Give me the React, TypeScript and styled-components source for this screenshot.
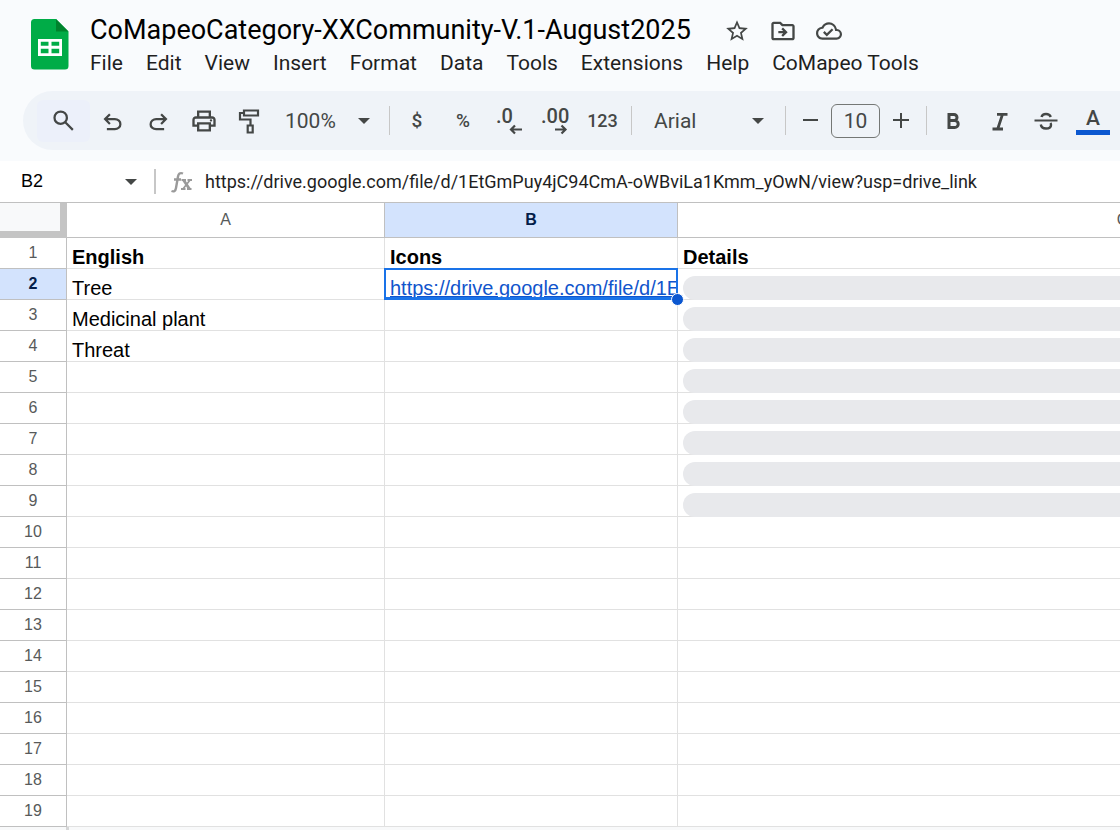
import React from "react";
import styled, { createGlobalStyle } from "styled-components";
import { MdStarBorder, MdOutlineDriveFileMove, MdOutlineCloudDone } from "react-icons/md";

const LINK =
  "https://drive.google.com/file/d/1EtGmPuy4jC94CmA-oWBviLa1Kmm_yOwN/view?usp=drive_link";

const Global = createGlobalStyle`
  * { box-sizing: border-box; }
  body { margin: 0; background: #f9fbfd; overflow: hidden; }
  button, input, select { font: inherit; color: inherit; margin: 0; padding: 0; border: 0; background: none; }
`;

const Page = styled.div`
  display: flex;
  flex-direction: column;
  height: 100vh;
  overflow: hidden;
  font-family: Roboto, "Liberation Sans", sans-serif;
  color: #1f1f1f;
`;

const Header = styled.header`
  display: flex;
  flex: none;
  gap: 21px;
  padding: 13px 0 12px 31px;
`;

const Logo = styled.svg`
  display: block;
  margin-top: 6px;
`;

const HeaderText = styled.div`
  display: flex;
  flex-direction: column;
`;

const TitleRow = styled.div`
  display: flex;
  align-items: center;
  gap: 33px;
  height: 35px;
  white-space: nowrap;
`;

const Title = styled.h1`
  margin: 0;
  padding-bottom: 2px;
  font-size: 27px;
  line-height: 32px;
  font-weight: 400;
  color: #000;
`;

const TitleActions = styled.div`
  display: flex;
  align-items: center;
  gap: 19px;
`;

const PlainButton = styled.button`
  display: flex;
  align-items: center;
  justify-content: center;
  color: #444746;
`;

const MenuBar = styled.nav`
  display: flex;
  gap: 23px;
  height: 31px;
  font-size: 21px;
  line-height: 31px;
  white-space: nowrap;
`;

const Toolbar = styled.div`
  display: flex;
  flex: none;
  align-items: center;
  height: 59px;
  margin-left: 23px;
  padding-left: 14px;
  border-radius: 30px 0 0 30px;
  background: #eff3f8;
  color: #444746;
  overflow: hidden;
  white-space: nowrap;
`;

const ToolButton = styled.button<{ $width?: number; $size?: number }>`
  display: flex;
  flex: none;
  align-items: center;
  justify-content: center;
  width: ${(p) => p.$width ?? 46}px;
  height: 42px;
  font-size: ${(p) => p.$size ?? 19}px;
  font-weight: 500;
`;

const SearchButton = styled(ToolButton)`
  border-radius: 6px;
  background: #ecf0fa;
`;

const Separator = styled.span`
  flex: none;
  width: 1px;
  height: 29px;
  margin: 0 4px;
  background: #c7c7c7;
`;

const SelectBox = styled.label<{ $width: number; $left: number; $right: number }>`
  display: grid;
  flex: none;
  align-items: center;
  width: ${(p) => p.$width}px;
  height: 42px;
  font-size: 21px;

  select,
  svg {
    grid-area: 1 / 1;
  }
  select {
    appearance: none;
    width: 100%;
    height: 42px;
    padding-left: ${(p) => p.$left}px;
  }
  svg {
    justify-self: end;
    margin-right: ${(p) => p.$right}px;
    pointer-events: none;
  }
`;

const SizeInput = styled.input`
  flex: none;
  width: 49px;
  height: 34px;
  border: 1px solid #747775;
  border-radius: 6px;
  font-size: 21px;
  text-align: center;
`;

const ColorLetter = styled.span`
  display: flex;
  flex-direction: column;
  align-items: center;
  width: 34px;
  border-bottom: 5px solid #0b57d0;
  font-size: 21px;
  line-height: 23px;
`;

const FormulaBar = styled.div`
  display: flex;
  flex: none;
  align-items: center;
  height: 42px;
  margin-top: 11px;
  border-bottom: 1px solid #c0c0c0;
  background: #fff;
`;

const NameBox = styled.input`
  width: 107px;
  padding-left: 21px;
  font-family: "Liberation Sans", Arial, sans-serif;
  font-size: 18px;
  color: #000;
`;

const BarDivider = styled.span`
  width: 2px;
  height: 25px;
  margin-right: 15px;
  background: #c7c7c7;
`;

const CaretButton = styled(PlainButton)`
  width: 47px;
  height: 30px;
`;

const FormulaInput = styled.input`
  flex: 1;
  min-width: 0;
  height: 30px;
  margin-left: 12px;
  font-size: 18px;
`;

const Grid = styled.div`
  flex: 1;
  overflow: hidden;
  background: #f8f9fa;
`;

const FreezeHandle = styled.div`
  width: 3px;
  height: 12px;
  margin-left: 66px;
  background: #d5d6d7;
`;

const Sheet = styled.table`
  table-layout: fixed;
  width: 1568px;
  border-spacing: 0;
  background: #fff;
  font-family: "Liberation Sans", Arial, sans-serif;
`;

const Col = styled.col<{ $width: number }>`
  width: ${(p) => p.$width}px;
`;

const Corner = styled.td`
  height: 35px;
  padding: 0;
  border: solid #c4c4c4;
  border-width: 0 7px 7px 0;
  background: #f8f9fa;
`;

const HeadCell = styled.th<{ $active?: boolean }>`
  height: ${(p) => (p.scope === "col" ? 35 : 31)}px;
  padding: 0;
  border: solid #c0c0c0;
  border-width: 0 1px 1px 0;
  background: ${(p) => (p.$active ? "#d3e3fd" : "#fff")};
  color: ${(p) => (p.$active ? "#041e49" : "#575a5a")};
  font-size: 16px;
  line-height: 18px;
  font-weight: ${(p) => (p.$active ? 700 : 400)};
  text-align: center;
`;

const Cell = styled.td<{ $bold?: boolean }>`
  position: relative;
  height: 31px;
  padding: 0 0 0 5px;
  border: solid #e1e1e1;
  border-width: 0 1px 1px 0;
  vertical-align: bottom;
  font-size: 20px;
  line-height: 21px;
  font-weight: ${(p) => (p.$bold ? 700 : 400)};
  color: #000;
  white-space: nowrap;
`;

const CellClip = styled.div`
  overflow: hidden;
  height: 21px;
`;

const CellLink = styled.a`
  color: #1155cc;
  text-decoration: underline;
`;

const Selection = styled.div`
  position: absolute;
  inset: -1px;
  border: 2px solid #1a73e8;
  border-bottom-width: 3px;
`;

const FillHandle = styled.span`
  position: absolute;
  right: -7px;
  bottom: -7px;
  z-index: 1;
  width: 13px;
  height: 13px;
  border: 1px solid #fff;
  border-radius: 50%;
  background: #0b57d0;
`;

const Placeholder = styled.div`
  height: 24px;
  margin: 7px 0 -1px;
  border-radius: 12px;
  background: #e8e9ec;
`;

const Symbol = ({ d, size = 27 }: { d: string; size?: number }) => (
  <svg width={size} height={size} viewBox="0 -960 960 960" fill="currentColor" aria-hidden="true">
    <path d={d} />
  </svg>
);

const Caret = () => (
  <svg width="12" height="6" viewBox="0 0 12 6" fill="#444746" aria-hidden="true">
    <path d="M0 0h12L6 6z" />
  </svg>
);

const SEARCH =
  "M784-120 532-372q-30 24-69 38t-83 14q-109 0-184.500-75.500T120-580q0-109 75.500-184.500T380-840q109 0 184.500 75.500T640-580q0 44-14 83t-38 69l252 252-56 56ZM380-400q75 0 127.500-52.500T560-580q0-75-52.500-127.500T380-760q-75 0-127.500 52.500T200-580q0 75 52.500 127.500T380-400Z";
const UNDO =
  "M280-130v-80h284q63 0 109.500-40T720-350q0-60-46.500-100T564-490H312l104 104-56 56-200-200 200-200 56 56-104 104h252q97 0 169.500 63T800-350q0 94-72.500 157T564-130H280Z";
const REDO =
  "M396-130q-97 0-169.500-63T160-350q0-94 72.500-157T396-570h252L544-674l56-56 200 200-200 200-56-56 104-104H396q-63 0-109.500 40T240-350q0 60 46.500 100T396-210h284v80H396Z";
const PRINT =
  "M640-640v-120H320v120h-80v-200h480v200h-80Zm-480 80h640-640Zm560 100q17 0 28.500-11.500T760-500q0-17-11.500-28.500T720-540q-17 0-28.500 11.500T680-500q0 17 11.500 28.500T720-460Zm-80 260v-160H320v160h320Zm80 80H240v-160H80v-240q0-51 35-85.500t85-34.500h560q51 0 85.500 34.500T880-520v240H720v160Zm80-240v-160q0-17-11.500-28.500T760-560H200q-17 0-28.500 11.500T160-520v160h80v-80h480v80h80Z";

const Roller = () => (
  <svg width="24" height="26" viewBox="0 0 24 26" fill="none" stroke="currentColor" strokeWidth="2.200" aria-hidden="true">
    <path d="M7 2.500h14v5H7zM7 5H3v6.500h10.500V17M10.700 17.500h5v7h-5z" />
  </svg>
);

const DecimalIcon = ({ digits, right }: { digits: string; right?: boolean }) => (
  <svg width="34" height="40" viewBox="0 0 34 40" aria-hidden="true">
    <text x={right ? 3 : 4} y="22" fontSize="20" fontWeight="500" fill="currentColor">
      {digits}
    </text>
    <path
      d={right ? "M17 28.500h10M23.500 24.500l4 4-4 4" : "M19 28.500h11M23 24.500l-4 4 4 4"}
      fill="none"
      stroke="currentColor"
      strokeWidth="2.200"
    />
  </svg>
);

const Strike = () => (
  <svg width="24" height="24" viewBox="0 0 24 24" fill="none" stroke="currentColor" strokeWidth="2.400" aria-hidden="true">
    <path d="M0.500 11.500h23" strokeWidth="2" />
    <path d="M16.800 8c-.8-2-2.600-3-4.800-3-2.400 0-4 1-4.500 3M6.800 15.500c.4 2.700 2.400 4 5.200 4 3 0 5-1.200 5-3.600 0-.8-.2-1.500-.6-2" />
  </svg>
);

const Italic = () => (
  <svg width="16" height="20" viewBox="0 0 16 20" fill="none" stroke="currentColor" strokeWidth="2.800" aria-hidden="true">
    <path d="M5 3.400h10.500M.5 18h10.500M10.500 3.400 5.700 18" />
  </svg>
);

const Bold = () => (
  <svg width="14" height="18" viewBox="0 0 14 18" fill="none" stroke="currentColor" strokeWidth="3" aria-hidden="true">
    <path d="M2 2.500h5a3 3 0 0 1 0 6H2zM2 8.500h5.700a3.500 3.500 0 0 1 0 7H2z" />
  </svg>
);

const Sheets = () => (
  <Logo width="38" height="51" viewBox="0 0 38 51" role="img" aria-label="Sheets">
    <path d="M3.500 0H25l12.500 12.500V47a3.500 3.500 0 0 1-3.500 3.500H3.500A3.500 3.500 0 0 1 0 47V3.500A3.500 3.500 0 0 1 3.500 0z" fill="#00ac47" />
    <path d="M25 0l12.500 12.500H25z" fill="#00832d" />
    <path d="M7 20h24v17H7zM9.800 22.700v4h7.700v-4zm10.700 0v4h7.700v-4zm-10.700 7v4.600h7.700v-4.600zm10.700 0v4.600h7.700v-4.600z" fill="#fff" fillRule="evenodd" />
  </Logo>
);

const MENUS = ["File", "Edit", "View", "Insert", "Format", "Data", "Tools", "Extensions", "Help", "CoMapeo Tools"];
const HEADINGS = ["English", "Icons", "Details"];
const NAMES: Record<number, string> = { 2: "Tree", 3: "Medicinal plant", 4: "Threat" };
const ROWS = Array.from({ length: 18 }, (_, i) => i + 2);

export default function App() {
  return (
    <Page>
      <Global />
      <Header>
        <Sheets />
        <HeaderText>
          <TitleRow>
            <Title>CoMapeoCategory-XXCommunity-V.1-August2025</Title>
            <TitleActions>
              <PlainButton aria-label="Star"><MdStarBorder size={26} /></PlainButton>
              <PlainButton aria-label="Move"><MdOutlineDriveFileMove size={28} /></PlainButton>
              <PlainButton aria-label="Saved to Drive"><MdOutlineCloudDone size={26} /></PlainButton>
            </TitleActions>
          </TitleRow>
          <MenuBar>
            {MENUS.map((m) => (
              <button key={m}>{m}</button>
            ))}
          </MenuBar>
        </HeaderText>
      </Header>

      <Toolbar role="toolbar">
        <SearchButton $width={53} aria-label="Search the menus"><Symbol d={SEARCH} /></SearchButton>
        <ToolButton $width={45} aria-label="Undo"><Symbol d={UNDO} /></ToolButton>
        <ToolButton aria-label="Redo"><Symbol d={REDO} /></ToolButton>
        <ToolButton $width={45} aria-label="Print"><Symbol d={PRINT} size={28} /></ToolButton>
        <ToolButton $width={45} aria-label="Paint format"><Roller /></ToolButton>
        <SelectBox $width={114} $left={14} $right={15}>
          <select aria-label="Zoom"><option>100%</option></select>
          <Caret />
        </SelectBox>
        <Separator />
        <ToolButton aria-label="Format as currency">$</ToolButton>
        <ToolButton aria-label="Format as percent">%</ToolButton>
        <ToolButton aria-label="Decrease decimal places"><DecimalIcon digits=".0" /></ToolButton>
        <ToolButton aria-label="Increase decimal places"><DecimalIcon digits=".00" right /></ToolButton>
        <ToolButton $width={49} $size={18} aria-label="More formats">123</ToolButton>
        <Separator />
        <SelectBox $width={145} $left={18} $right={17}>
          <select aria-label="Font"><option>Arial</option></select>
          <Caret />
        </SelectBox>
        <Separator />
        <ToolButton $width={41} aria-label="Decrease font size">
          <svg width="16" height="16" viewBox="0 0 16 16" stroke="currentColor" strokeWidth="2" aria-hidden="true"><path d="M0 7h15" /></svg>
        </ToolButton>
        <SizeInput aria-label="Font size" defaultValue="10" />
        <ToolButton $width={42} aria-label="Increase font size">
          <svg width="16" height="16" viewBox="0 0 16 16" stroke="currentColor" strokeWidth="2" aria-hidden="true"><path d="M0 7h16M8-1v16" /></svg>
        </ToolButton>
        <Separator />
        <ToolButton aria-label="Bold"><Bold /></ToolButton>
        <ToolButton aria-label="Italic"><Italic /></ToolButton>
        <ToolButton aria-label="Strikethrough"><Strike /></ToolButton>
        <ToolButton $width={48} aria-label="Text color"><ColorLetter>A</ColorLetter></ToolButton>
      </Toolbar>

      <FormulaBar>
        <NameBox aria-label="Name box" defaultValue="B2" />
        <CaretButton aria-label="Named ranges"><Caret /></CaretButton>
        <BarDivider />
        <svg width="22" height="22" viewBox="0 0 22 22" fill="none" stroke="#9a9a9a" aria-hidden="true">
          <path d="M12 2.500c-3-1.200-4.500.3-5 3L5 17c-.5 3-2 4-4.500 3M3 8.500h7" strokeWidth="2.400" />
          <path d="M10.500 9h4.500M16.500 9h4.500M10 18h4.500M16 18h4.500M19 9l-7 9" strokeWidth="1.800" />
          <path d="M12.500 9l6 9" strokeWidth="2.800" />
        </svg>
        <FormulaInput aria-label="Formula" defaultValue={LINK} />
      </FormulaBar>

      <Grid>
        <Sheet>
          <colgroup>
            <Col $width={67} />
            <Col $width={318} />
            <Col $width={293} />
            <Col $width={890} />
          </colgroup>
          <thead>
            <tr>
              <Corner />
              <HeadCell scope="col">A</HeadCell>
              <HeadCell scope="col" $active>B</HeadCell>
              <HeadCell scope="col">C</HeadCell>
            </tr>
          </thead>
          <tbody>
            <tr>
              <HeadCell scope="row">1</HeadCell>
              {HEADINGS.map((h) => (
                <Cell key={h} $bold>{h}</Cell>
              ))}
            </tr>
            {ROWS.map((n) => (
              <tr key={n}>
                <HeadCell scope="row" $active={n === 2}>{n}</HeadCell>
                <Cell>{NAMES[n]}</Cell>
                <Cell>
                  {n === 2 && (
                    <>
                      <CellClip><CellLink href={LINK}>{LINK}</CellLink></CellClip>
                      <Selection />
                      <FillHandle />
                    </>
                  )}
                </Cell>
                <Cell>{n < 10 && <Placeholder />}</Cell>
              </tr>
            ))}
          </tbody>
        </Sheet>
        <FreezeHandle />
      </Grid>
    </Page>
  );
}
